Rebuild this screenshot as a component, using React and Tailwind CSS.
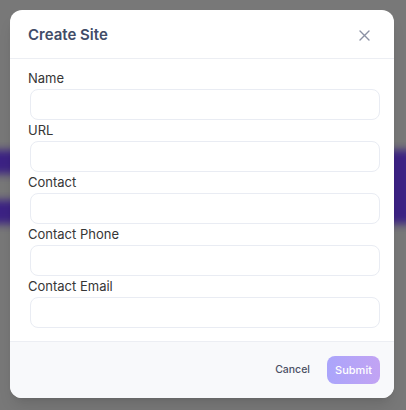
import React from "react";

const fields = ["Name", "URL", "Contact", "Contact Phone", "Contact Email"];

function Backdrop() {
  return (
    <div className="h-[410px] w-[406px] overflow-hidden bg-[#787878]">
      <div className="blur-[4px]">
        <div className="h-[150px]" />
        <div className="flex h-[24px]">
          <div className="-mx-[10px] w-[426px] bg-[#3c2284]" />
        </div>
        <div className="flex h-[26px]">
          <div className="w-[40px]" />
          <div className="flex-1" />
          <div className="-mr-[10px] w-[50px] bg-[#3c2284]" />
        </div>
        <div className="flex h-[24px]">
          <div className="-mx-[10px] w-[426px] bg-[#3c2284]" />
        </div>
      </div>
    </div>
  );
}

export default function App() {
  return (
    <div
      className="relative h-[410px] w-[406px] overflow-hidden"
      style={{ fontFamily: "Inter, 'Noto Sans', sans-serif" }}
    >
      <Backdrop />
      <div className="absolute left-[10px] top-[10px] flex h-[388px] w-[384px] flex-col overflow-hidden rounded-xl bg-white shadow-lg">
        <div className="flex h-[49px] items-center justify-between border-b border-[#eceef3] pl-[18px] pr-[24px] pt-[2px]">
          <h2 className="text-[15px] font-semibold text-[#414c68]">Create Site</h2>
          <svg width="11" height="11" viewBox="0 0 11 11" fill="none" stroke="#8b91a4" strokeWidth="1.4" strokeLinecap="round">
            <path d="M1 1L10 10M10 1L1 10" />
          </svg>
        </div>
        <div className="flex flex-1 flex-col pl-[18px] pr-[14px] pt-[10px]">
          {fields.map((f) => (
            <div key={f} className="flex flex-col">
              <label className="h-[19px] text-[13px] leading-[19px] text-[#363636]">{f}</label>
              <input className="mb-[1px] ml-[2px] mt-[1px] h-[31px] rounded-lg border border-[#e9ecf3] bg-white outline-none" />
            </div>
          ))}
        </div>
        <div className="flex h-[57px] items-center justify-end gap-[17px] border-t border-[#eceef3] bg-[#f8f9fb] pr-[14px]">
          <button className="text-[10.5px] font-medium text-[#4a5064]">Cancel</button>
          <button className="h-[28px] w-[53px] rounded-lg bg-gradient-to-r from-[#aaa5fb] to-[#c2a3f3] text-[11px] font-medium text-white">
            Submit
          </button>
        </div>
      </div>
    </div>
  );
}
